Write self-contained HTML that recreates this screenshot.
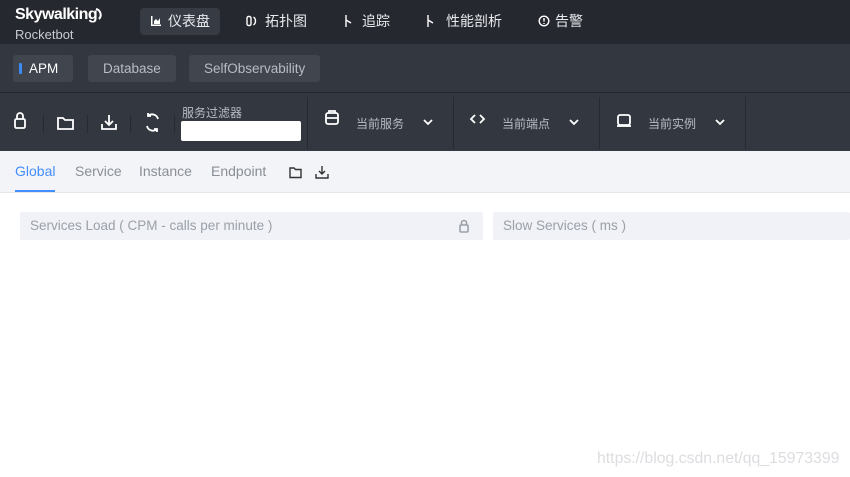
<!DOCTYPE html>
<html><head><meta charset="utf-8"><style>
*{margin:0;padding:0;box-sizing:border-box}
body{width:850px;height:477px;overflow:hidden;background:#fff;font-family:"Liberation Sans","Noto Sans CJK SC",sans-serif;position:relative}
.a{position:absolute}
.top{left:0;top:0;width:850px;height:44px;background:#25282e}
.nav{color:#e8eaee;font-size:14px;top:8px;height:27px;line-height:27px;padding:0 10px;border-radius:4px}
.sec{left:0;top:44px;width:850px;height:49px;background:#333840;border-bottom:1px solid #23262b}
.btn{top:55px;height:27px;line-height:27px;background:#40454e;border-radius:3px;color:#b8bcc4;font-size:13.5px;padding:0 15px}
.tb{left:0;top:93px;width:850px;height:58px;background:#333840}
.sep{width:1px;background:#262a30}
.tabs{left:0;top:151px;width:850px;height:42px;background:#f3f4f8;border-bottom:1px solid #e4e6ea}
.tab{top:163px;font-size:14px;color:#8a8e96}
.card{top:212px;height:28px;background:#f1f2f7;border-radius:2px;color:#9aa0a8;font-size:13.5px;line-height:28px;padding-left:10px}
</style></head><body>
<div class="a top"></div>
<div class="a" style="left:15px;top:6px;color:#fff;font-size:16px;font-weight:bold;letter-spacing:-0.5px">Skywalking</div>
<svg class="a" style="left:94px;top:7px" width="12" height="14" fill="none" stroke="#fff" stroke-width="2"><path d="M2 2a6 6 0 0 1 3 10"/></svg>
<div class="a" style="left:15px;top:27px;color:#c8ccd2;font-size:13px">Rocketbot</div>
<div class="a nav" style="left:140px;background:#363b44;padding-left:28px">仪表盘</div>
<svg class="a" style="left:150px;top:15px" width="12" height="12" fill="#fff"><path d="M1 1h1.5v8.5H11V11H1z M4 9V6l2-2 2 2 2-3v6z"/></svg>
<div class="a nav" style="left:255px">拓扑图</div>
<svg class="a" style="left:246px;top:15px" width="12" height="12" fill="none" stroke="#fff" stroke-width="1.4"><rect x="1" y="1.5" width="4" height="9" rx="1.5"/><path d="M7.5 2a5 5 0 0 1 0 8"/></svg>
<div class="a nav" style="left:352px">追踪</div>
<div class="a nav" style="left:436px">性能剖析</div>
<svg class="a" style="left:344px;top:15px" width="100" height="12" fill="none" stroke="#fff" stroke-width="1.4"><path d="M2 0v12M2 5l5 3M84 0v12M84 5l5 3"/></svg>
<div class="a nav" style="left:545px">告警</div>
<svg class="a" style="left:538px;top:15px" width="12" height="12" fill="none" stroke="#fff" stroke-width="1.4"><circle cx="6" cy="6" r="4.8"/><path d="M6 3v3.5M6 8v1"/></svg>
<div class="a sec"></div>
<div class="a btn" style="left:13px;color:#fff;padding-left:16px"><span class="a" style="left:6px;top:8px;width:3px;height:11px;background:#3d8bf2;border-radius:1px"></span>APM</div>
<div class="a btn" style="left:88px">Database</div>
<div class="a btn" style="left:189px">SelfObservability</div>
<div class="a tb"></div>
<svg class="a" style="left:0;top:93px" width="850" height="58" fill="none" stroke="#fff" stroke-width="1.8">
<rect x="15" y="26" width="10" height="9" rx="1.5"/><path d="M17 26v-3a3 3 0 0 1 6 0v3"/>
<path d="M58 25h5l2 2h8v9H58z"/>
<path d="M109 22v10M105 28l4 4 4-4M102 31v5h14v-5"/>
<path d="M158 26a6 6 0 0 0-10-3M147 33a6 6 0 0 0 10 3M148 20v3h3M157 39v-3h-3"/>
<rect x="326" y="20" width="12" height="11" rx="2"/><path d="M329 20v-2h6v2M326 25h12"/>
<path d="M424 27l4 4 4-4M570 27l4 4 4-4M716 27l4 4 4-4"/>
<path d="M475 26l-4 4 4 4M480 26l4 4-4 4" transform="translate(0,-4)"/>
<rect x="618" y="22" width="12" height="10" rx="2"/><path d="M617 33h14"/>
</svg>
<div class="a sep" style="left:43px;top:115px;height:18px"></div>
<div class="a sep" style="left:87px;top:115px;height:18px"></div>
<div class="a sep" style="left:130px;top:115px;height:18px"></div>
<div class="a sep" style="left:174px;top:115px;height:18px"></div>
<div class="a sep" style="left:307px;top:97px;height:52px"></div>
<div class="a sep" style="left:453px;top:97px;height:52px"></div>
<div class="a sep" style="left:599px;top:97px;height:52px"></div>
<div class="a sep" style="left:745px;top:97px;height:52px"></div>
<div class="a" style="left:182px;top:104px;color:#b8bcc4;font-size:12px">服务过滤器</div>
<div class="a" style="left:181px;top:121px;width:120px;height:20px;background:#fff;border-radius:2px"></div>
<div class="a" style="left:356px;top:115px;color:#b8bcc4;font-size:12px">当前服务</div>
<div class="a" style="left:502px;top:115px;color:#b8bcc4;font-size:12px">当前端点</div>
<div class="a" style="left:648px;top:115px;color:#b8bcc4;font-size:12px">当前实例</div>
<div class="a tabs"></div>
<div class="a tab" style="left:15px;color:#448dfe">Global</div>
<div class="a" style="left:15px;top:190px;width:40px;height:2px;background:#448dfe"></div>
<div class="a tab" style="left:75px">Service</div>
<div class="a tab" style="left:139px">Instance</div>
<div class="a tab" style="left:211px">Endpoint</div>
<svg class="a" style="left:288px;top:163px" width="45" height="18" fill="none" stroke="#333" stroke-width="1.4">
<path d="M2 5h4l1.5 1.5H13v8H2z"/><path d="M34 3v8M31 8l3 3 3-3M28 11v4h12v-4"/></svg>
<div class="a card" style="left:20px;width:463px">Services Load ( CPM - calls per minute )
<svg class="a" style="left:438px;top:7px" width="12" height="14" fill="none" stroke="#9aa0a8" stroke-width="1.6"><rect x="2" y="6" width="8" height="7" rx="1"/><path d="M3.5 6V4a2.5 2.5 0 0 1 5 0v2"/></svg></div>
<div class="a card" style="left:493px;width:357px">Slow Services ( ms )</div>
<div class="a" style="left:597px;top:450px;color:#dcdde0;font-size:15.8px">https://blog.csdn.net/qq_15973399</div>
</body></html>
